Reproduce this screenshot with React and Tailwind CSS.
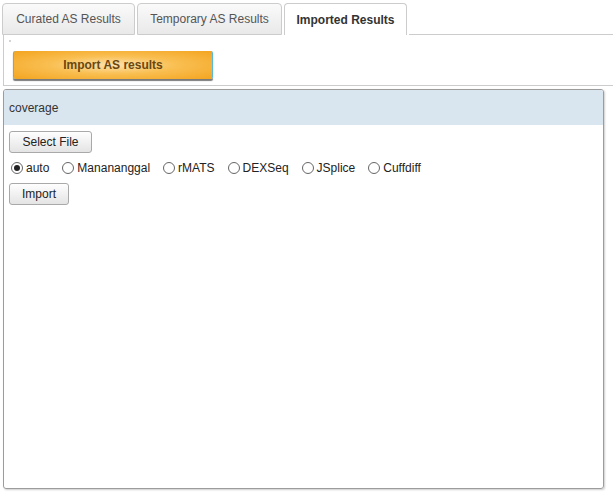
import { useState } from 'react';

const tabs = ['Curated AS Results', 'Temporary AS Results', 'Imported Results'];
const tabWidths = ['w-[133px]', 'w-[145px]', 'w-[123px]'];
const methods = ['auto', 'Manananggal', 'rMATS', 'DEXSeq', 'JSplice', 'Cuffdiff'];

function Radio({ label, checked, onSelect }) {
    return (
        <label className="flex items-center gap-[3px] cursor-pointer" onClick={onSelect}>
            <span className="w-[12px] h-[12px] rounded-full border border-[#666] bg-white flex items-center justify-center">
                {checked && <span className="w-[6px] h-[6px] rounded-full bg-[#222]" />}
            </span>
            <span className="text-[12px] text-[#222] leading-[16px]">{label}</span>
        </label>
    );
}

function GrayButton({ children, width }) {
    return (
        <button
            className={`${width} h-[22px] rounded-[3px] border border-[#a9a9a9] bg-gradient-to-b from-[#fefefe] to-[#e4e4e4] text-[12px] text-[#222] leading-none`}
        >
            {children}
        </button>
    );
}

export default function App() {
    const [active, setActive] = useState(2);
    const [method, setMethod] = useState('auto');

    return (
        <div className="w-[613px] h-[495px] bg-white font-['Liberation_Sans',Arial,sans-serif] overflow-hidden flex flex-col">
            {/* Tab bar */}
            <div className="pt-[3px] flex gap-[2px] pl-[2px] h-[35px]">
                {tabs.map((t, i) => (
                    <button
                        key={t}
                        onClick={() => setActive(i)}
                        className={
                            i === active
                                ? `${tabWidths[i]} h-[32px] rounded-t-[4px] border border-b-0 border-[#ccc] bg-white text-[12px] font-bold text-[#333]`
                                : `${tabWidths[i]} h-[32px] rounded-t-[4px] border border-[#ccc] bg-gradient-to-b from-[#fafafa] to-[#e9e9e9] text-[12px] text-[#555]`
                        }
                    >
                        {t}
                    </button>
                ))}
                <div className="flex-1 border-b border-[#ccc]" />
            </div>

            {/* Tab content header */}
            <div className="ml-[3px] h-[51px] border-l border-b border-[#ccc] flex flex-col items-start pt-[5px]">
                <div className="ml-[5px] w-[2px] h-[2px] bg-[#d4d4d4]" />
                <button className="ml-[9px] mt-[9px] w-[200px] h-[28px] rounded-[2px] border-x border-[#5ab7dc] bg-[radial-gradient(ellipse_at_center,#fde2ad_0%,#f9bf52_45%,#f4a41f_100%)] shadow-[0_2px_1px_#7a7a7a] text-[12px] font-bold text-[#6a4710]">
                    Import AS results
                </button>
            </div>

            {/* Import panel */}
            <div className="ml-[3px] mt-[3px] w-[601px] h-[400px] rounded-[3px] border border-[#9c9c9c] shadow-[1px_1px_2px_rgba(0,0,0,0.2)] overflow-hidden flex flex-col">
                <div className="h-[35px] shrink-0 bg-[#d9e5ef] pl-[5px] flex items-center text-[12px] text-[#333]">
                    coverage
                </div>
                <div className="pl-[5px] flex flex-col items-start">
                    <div className="mt-[6px] flex">
                        <GrayButton width="w-[83px]">Select File</GrayButton>
                    </div>
                    <div className="mt-[7px] ml-[2px] flex items-center gap-[13px] h-[16px]">
                        {methods.map((m) => (
                            <Radio key={m} label={m} checked={method === m} onSelect={() => setMethod(m)} />
                        ))}
                    </div>
                    <div className="mt-[7px] flex">
                        <GrayButton width="w-[60px]">Import</GrayButton>
                    </div>
                </div>
            </div>
        </div>
    );
}
